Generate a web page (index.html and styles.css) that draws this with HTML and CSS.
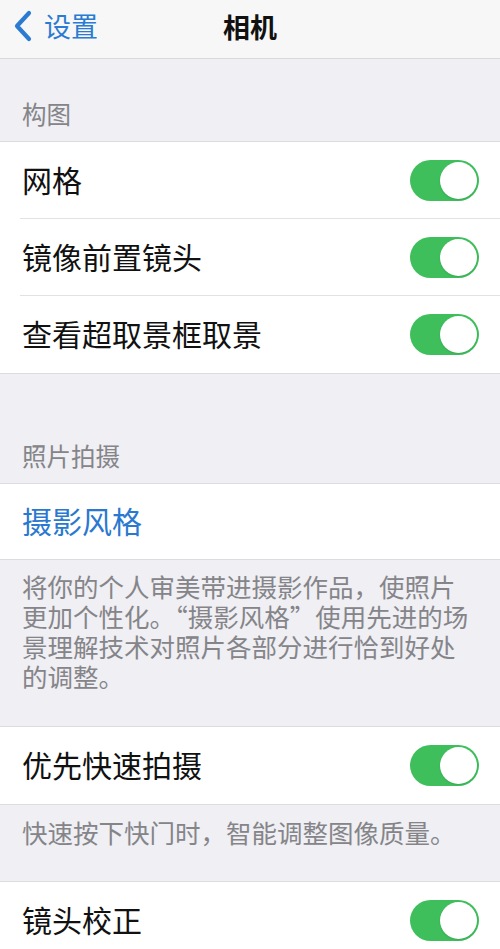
FILE: index.html
```html
<!DOCTYPE html>
<html lang="zh-CN">
<head>
  <meta charset="UTF-8" />
  <meta name="viewport" content="width=device-width, initial-scale=1" />
  <title>相机</title>
  <link rel="stylesheet" href="styles.css">
</head>
<body>
  <header class="navbar">
    <a class="back" href="#">
      <svg class="chevron" width="22" height="32" viewBox="0 0 22 32"><path d="M17 3 L5 16 L17 29" fill="none" stroke="currentColor" stroke-width="4.2" stroke-linecap="round" stroke-linejoin="round"/></svg>
      <span>设置</span>
    </a>
    <h1>相机</h1>
  </header>

  <div class="group-title first">构图</div>
  <ul class="group">
    <li class="row"><span>网格</span><span class="switch on"></span></li>
    <li class="row"><span>镜像前置镜头</span><span class="switch on"></span></li>
    <li class="row"><span>查看超取景框取景</span><span class="switch on"></span></li>
  </ul>

  <div class="group-title">照片拍摄</div>
  <ul class="group">
    <li class="row link"><span>摄影风格</span></li>
  </ul>
  <p class="group-note">将你的个人审美带进摄影作品，使照片<br>更加个性化。“摄影风格”使用先进的场<br>景理解技术对照片各部分进行恰到好处<br>的调整。</p>

  <ul class="group">
    <li class="row"><span>优先快速拍摄</span><span class="switch on"></span></li>
  </ul>
  <p class="group-note short">快速按下快门时，智能调整图像质量。</p>

  <ul class="group">
    <li class="row"><span>镜头校正</span><span class="switch on"></span></li>
  </ul>
</body>
</html>
```

FILE: styles.css
```css
* { box-sizing: border-box; margin: 0; padding: 0; }
body { font-family: "Noto Sans CJK SC", "Noto Sans", sans-serif; background: #efeff4; color: #111; overflow: hidden; }

.navbar { height: 59px; background: #f7f7f7; border-bottom: 1px solid #d9d9dc; display: flex; align-items: center; justify-content: center; position: relative; }
.navbar h1 { font-size: 27px; font-weight: 700; color: #111; line-height: 1; margin-top: -6px; }
.back { position: absolute; left: 12px; top: 10px; display: flex; align-items: center; gap: 10px; color: #2b7bd3; text-decoration: none; font-size: 27px; line-height: 1; }
.back span { margin-top: -1px; }

.group-title { padding: 0 22px 15px; height: 109px; display: flex; align-items: flex-end; font-size: 24.5px; line-height: 1; color: #858589; }
.group-title.first { height: 82px; }

.group { list-style: none; background: #fff; border-top: 1px solid #dcdce0; border-bottom: 1px solid #dcdce0; }
.row { height: 77px; display: flex; align-items: center; justify-content: space-between; padding: 0 21px 3px 22px; font-size: 30px; line-height: 1; position: relative; }
.row + .row::before { content: ""; position: absolute; top: -1px; left: 20px; right: 0; border-top: 1px solid #e2e2e6; }
.row.link { height: 75px; color: #2a78cf; }

.switch { width: 69px; height: 41px; border-radius: 21px; background: #e5e5ea; position: relative; flex: none; margin-bottom: -3px; }
.switch.on { background: #3ebf5c; }
.switch::after { content: ""; position: absolute; top: 2px; left: 2px; width: 37px; height: 37px; border-radius: 50%; background: #fff; box-shadow: 0 1px 2px rgba(0,0,0,0.12); }
.switch.on::after { left: 30px; }

.group-note { padding: 11px 22px 35px; font-size: 25.5px; line-height: 30px; color: #858589; white-space: nowrap; }
.group-note.short { padding: 12px 22px 34px; }
```
